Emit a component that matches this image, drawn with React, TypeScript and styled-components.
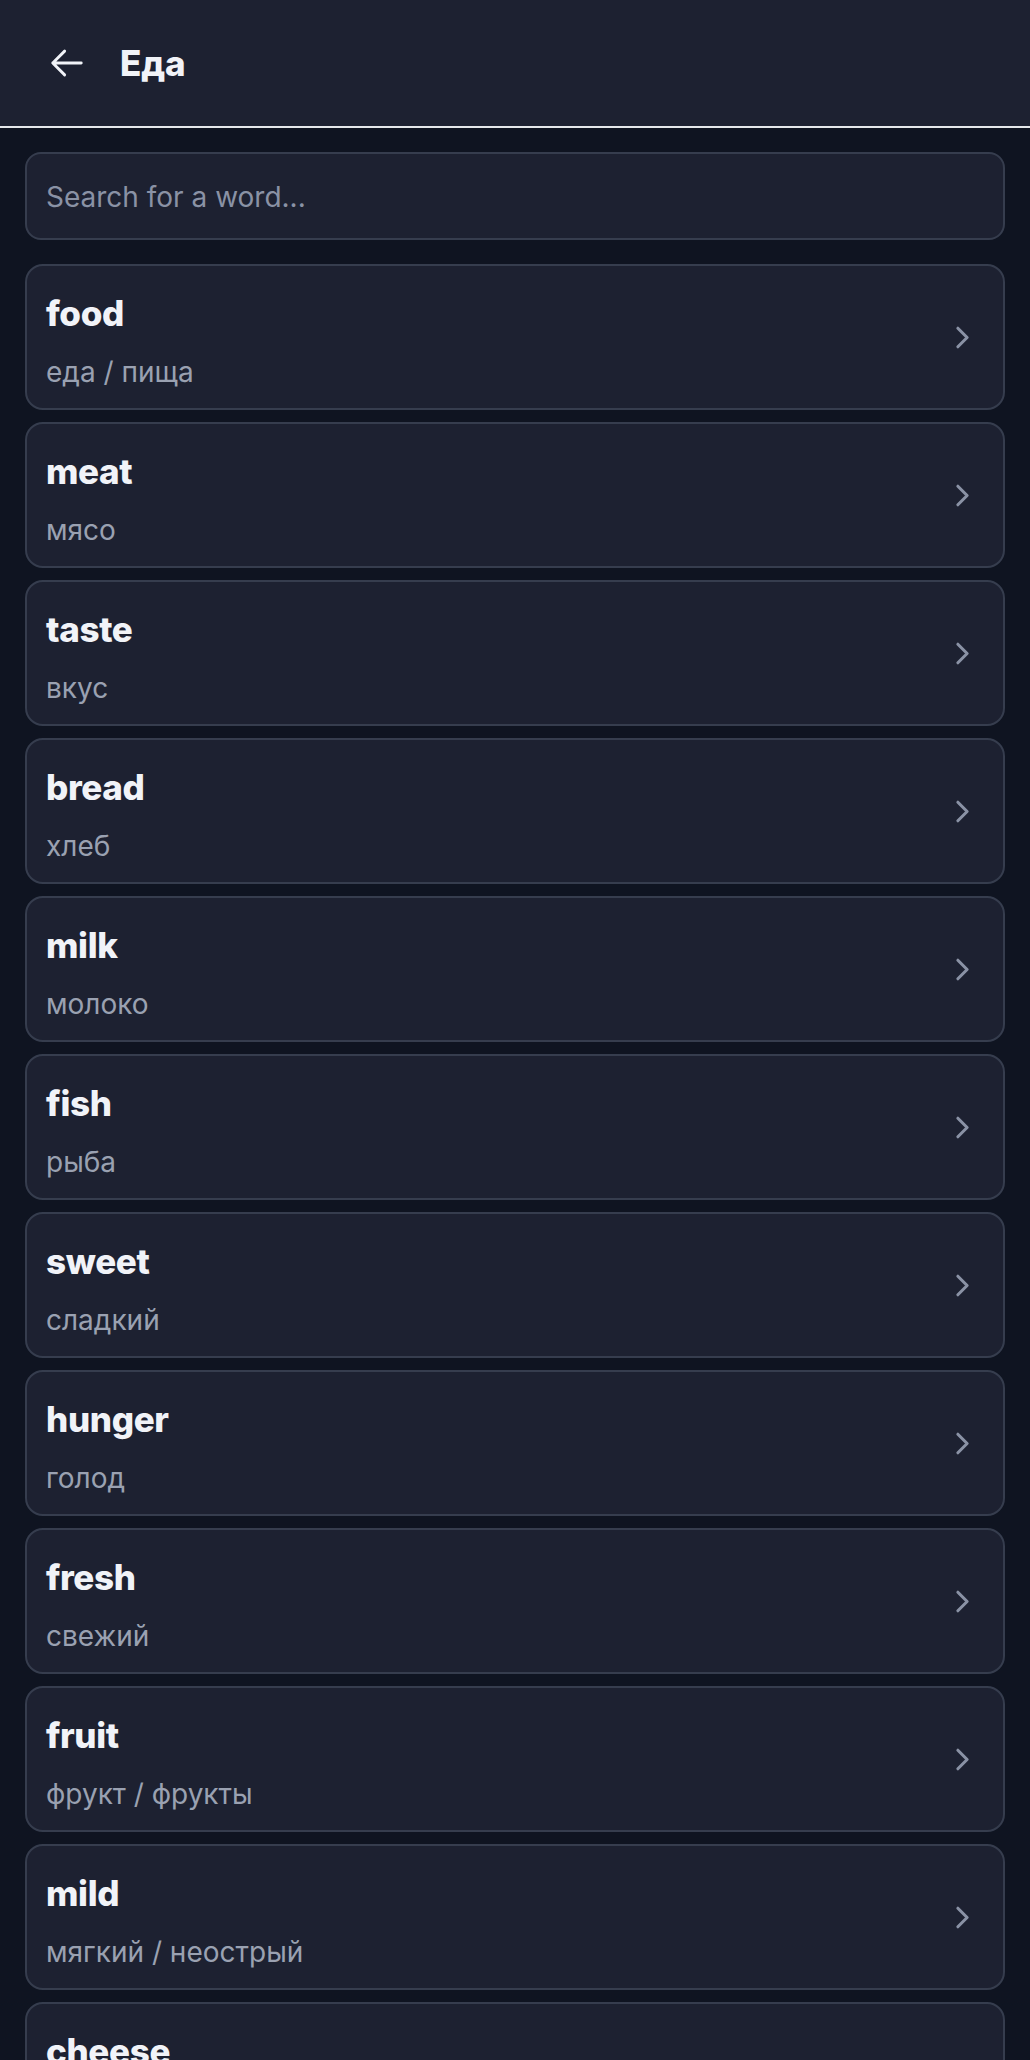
import React from "react";
import styled, { createGlobalStyle } from "styled-components";

const GlobalStyle = createGlobalStyle`
  html, body {
    margin: 0;
    padding: 0;
    background: #0f1421;
  }
  body {
    font-family: Inter, "Noto Sans", "DejaVu Sans", sans-serif;
    -webkit-font-smoothing: antialiased;
  }
  * { box-sizing: border-box; }
`;

const Page = styled.div`
  min-height: 100vh;
  background: #0f1421;
`;

const Header = styled.header`
  height: 128px;
  display: flex;
  align-items: center;
  gap: 26px;
  padding: 0 40px;
  background: #1d2131;
  border-bottom: 2px solid #e5e7eb;
`;

const BackButton = styled.button`
  display: flex;
  align-items: center;
  justify-content: center;
  padding: 8px;
  margin: 0;
  border: none;
  background: transparent;
  color: #f1f3f8;
  cursor: pointer;
`;

const Title = styled.h1`
  margin: 0;
  font-size: 35px;
  line-height: 40px;
  font-weight: 800;
  color: #f1f3f8;
  letter-spacing: -0.005em;
`;

const Main = styled.main`
  display: flex;
  flex-direction: column;
  gap: 12px;
  padding: 24px 25px;
`;

const Search = styled.input`
  height: 88px;
  width: 100%;
  margin-bottom: 12px;
  padding: 2px 19px 0;
  border: 2px solid #363d4e;
  border-radius: 16px;
  background: #1d2131;
  color: #f1f3f8;
  font-family: Inter, "Noto Sans", sans-serif;
  font-size: 28px;
  outline: none;
  &::placeholder {
    color: #8a92a5;
  }
`;

const Card = styled.div`
  display: flex;
  align-items: center;
  height: 146px;
  padding: 0 22px 0 19px;
  border: 2px solid #363d4e;
  border-radius: 18px;
  background: #1d2131;
  cursor: pointer;
`;

const Texts = styled.div`
  flex: 1;
  display: flex;
  flex-direction: column;
  padding: 25px 0 19px;
`;

const Word = styled.div`
  font-size: 35px;
  line-height: 40px;
  font-weight: 800;
  color: #f1f3f8;
  letter-spacing: -0.01em;
`;

const Translation = styled.div`
  margin-top: 23px;
  font-size: 28px;
  line-height: 32px;
  font-weight: 400;
  color: #9aa1b1;
`;

const Chevron = styled.svg`
  flex: none;
  width: 37px;
  height: 37px;
  color: #8a92a5;
`;

const ArrowIcon = styled.svg`
  width: 38px;
  height: 38px;
`;

const words: [string, string][] = [
  ["food", "еда / пища"],
  ["meat", "мясо"],
  ["taste", "вкус"],
  ["bread", "хлеб"],
  ["milk", "молоко"],
  ["fish", "рыба"],
  ["sweet", "сладкий"],
  ["hunger", "голод"],
  ["fresh", "свежий"],
  ["fruit", "фрукт / фрукты"],
  ["mild", "мягкий / неострый"],
  ["cheese", "сыр"],
  ["water", "вода"],
];

export default function App() {
  return (
    <Page>
      <GlobalStyle />
      <Header>
        <BackButton aria-label="Back">
          <ArrowIcon viewBox="0 0 24 24" fill="none" stroke="currentColor" strokeWidth={1.8} strokeLinecap="round" strokeLinejoin="round">
            <path d="M10.5 19.5 3 12m0 0 7.5-7.5M3 12h18" />
          </ArrowIcon>
        </BackButton>
        <Title>Еда</Title>
      </Header>
      <Main>
        <Search placeholder="Search for a word..." />
        {words.map(([w, t]) => (
          <Card key={w}>
            <Texts>
              <Word>{w}</Word>
              <Translation>{t}</Translation>
            </Texts>
            <Chevron viewBox="0 0 24 24" fill="none" stroke="currentColor" strokeWidth={2} strokeLinecap="round" strokeLinejoin="round">
              <path d="m9 18 6-6-6-6" />
            </Chevron>
          </Card>
        ))}
      </Main>
    </Page>
  );
}
